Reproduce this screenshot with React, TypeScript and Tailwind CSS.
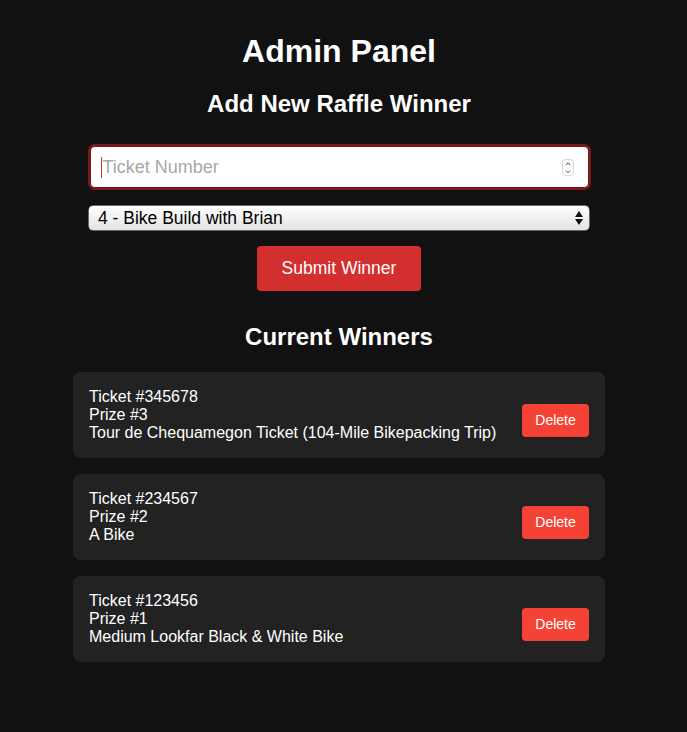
import { ChevronDown, ChevronUp } from "lucide-react";

type Winner = { ticket: string; prize: number; name: string };

const winners: Winner[] = [
  { ticket: "345678", prize: 3, name: "Tour de Chequamegon Ticket (104-Mile Bikepacking Trip)" },
  { ticket: "234567", prize: 2, name: "A Bike" },
  { ticket: "123456", prize: 1, name: "Medium Lookfar Black & White Bike" },
];

const WinnerCard = ({ ticket, prize, name }: Winner) => (
  <div className="flex items-center justify-between rounded-lg bg-[#222222] px-4 py-4">
    <div className="text-[16px] leading-[18px] text-white">
      <div>Ticket #{ticket}</div>
      <div>Prize #{prize}</div>
      <div>{name}</div>
    </div>
    <button className="mt-[10px] h-[33px] w-[67px] rounded-[4px] bg-[#f44336] text-[14px] text-white">
      Delete
    </button>
  </div>
);

const App = () => {
  return (
    <div className="min-h-[732px] w-full bg-[#111111] font-['Liberation_Sans',Arial,sans-serif]">
      <div className="w-[678px] pt-[31px]">
        <div className="mx-auto flex w-[532px] flex-col items-center">
          <h1 className="text-[32px] font-bold leading-[40px] text-white">Admin Panel</h1>
          <h2 className="mt-[19px] text-[24px] font-bold leading-[28px] text-white">
            Add New Raffle Winner
          </h2>

          <div className="mt-[26px] flex w-[503px] flex-col items-center">
            <div className="relative h-[46px] w-full rounded-[7px] border-[3px] border-[#7a1a1a] bg-white">
              <div className="flex h-full items-center pl-[10px]">
                <span className="h-[21px] w-[2px] bg-[#d32f2f]" />
                <input
                  type="text"
                  placeholder="Ticket Number"
                  className="w-full bg-transparent text-[18px] text-black outline-none placeholder:text-[#a8a8a8]"
                />
              </div>
              <div className="absolute right-[14px] top-[12px] flex h-[17px] w-[12px] flex-col items-center justify-center rounded-[4px] border border-[#d6d6d6] text-[#333]">
                <ChevronUp size={8} strokeWidth={3} />
                <ChevronDown size={8} strokeWidth={3} />
              </div>
            </div>

            <div className="relative mt-[16px] h-[24px] w-[500px] rounded-[4px] bg-gradient-to-b from-white to-[#e3e3e3] shadow-[0_0_0_0.5px_#bbb]">
              <div className="pl-[9px] text-[17.5px] leading-[24px] text-black">
                4 - Bike Build with Brian
              </div>
              <div className="absolute right-[6px] top-[5px] flex flex-col items-center gap-[2px]">
                <svg width="8" height="6" viewBox="0 0 8 6">
                  <path d="M4 0 L8 6 L0 6 Z" fill="#111" />
                </svg>
                <svg width="8" height="6" viewBox="0 0 8 6">
                  <path d="M0 0 L8 0 L4 6 Z" fill="#111" />
                </svg>
              </div>
            </div>

            <button className="mt-[16px] h-[45px] w-[164px] rounded-[4px] bg-[#d32f2f] text-[17.5px] text-white">
              Submit Winner
            </button>
          </div>

          <h2 className="mt-[32px] text-[24px] font-bold leading-[28px] text-white">
            Current Winners
          </h2>

          <div className="mt-[21px] flex w-full flex-col gap-[16px]">
            {winners.map((w) => (
              <WinnerCard key={w.ticket} {...w} />
            ))}
          </div>
        </div>
      </div>
    </div>
  );
};

export default App;
